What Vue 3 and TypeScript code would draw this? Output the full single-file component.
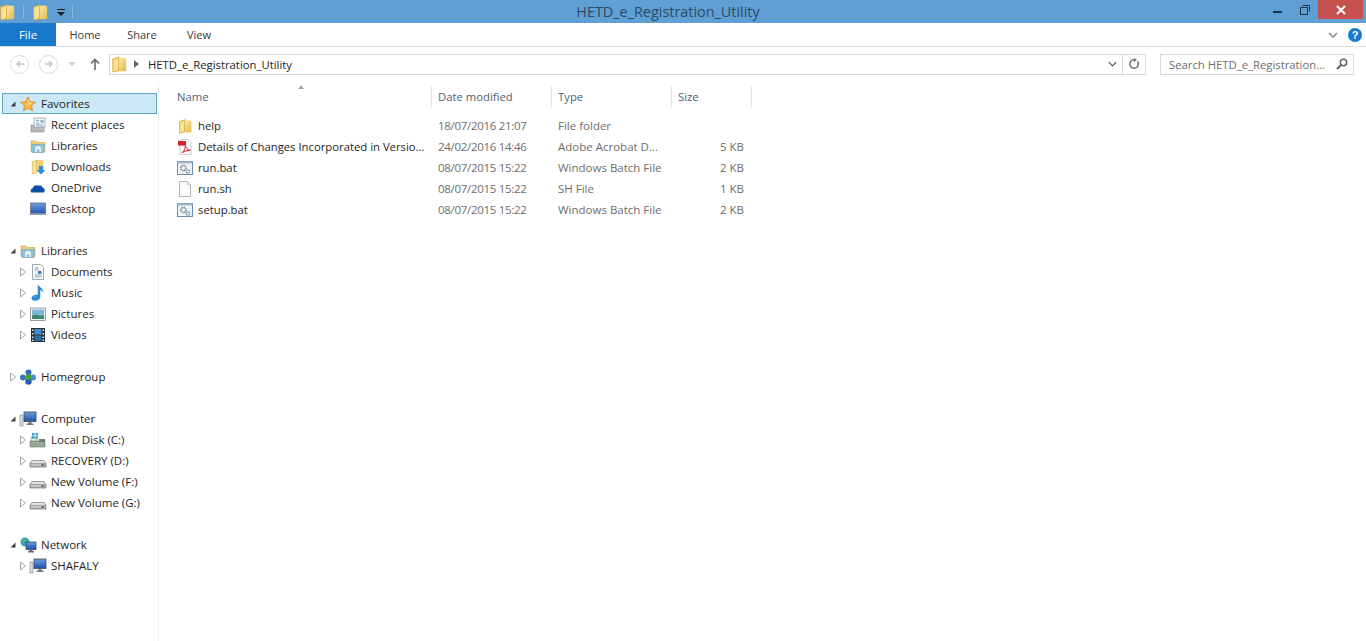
<template>
  <div class="explorer">
    <!-- shared icons, used through <use> below -->
    <svg class="defs" aria-hidden="true">
      <defs>
        <linearGradient id="g-folder" x1="0" y1="0" x2="1" y2="1">
          <stop offset="0" stop-color="#fff0b0" />
          <stop offset="1" stop-color="#e2b548" />
        </linearGradient>
        <linearGradient id="g-screen" x1="0" y1="0" x2="0" y2="1">
          <stop offset="0" stop-color="#6f9fe0" />
          <stop offset="1" stop-color="#1c4fa8" />
        </linearGradient>
        <linearGradient id="g-drive" x1="0" y1="0" x2="0" y2="1">
          <stop offset="0" stop-color="#f4f4f4" />
          <stop offset="1" stop-color="#a4a4a4" />
        </linearGradient>
      </defs>
      <symbol id="i-folder" viewBox="0 0 16 16">
        <path d="M2 3.500 7 1.500h1.500V14L4 15.200H2.600z" fill="#e4b94f" />
        <path d="M8 2.500h5.600l.8 1v10.200l-.8.8H6.500L8 13z" fill="url(#g-folder)" />
        <path d="M2.500 4 7.600 2v11.400l-5.100 1.800z" fill="#f8e296" stroke="#d5a63d" stroke-width=".6" />
      </symbol>
      <symbol id="i-star" viewBox="0 0 16 16">
        <path d="M8 .8 10.200 5.600l5.200.6-3.900 3.500 1.100 5.200L8 12.300l-4.600 2.600 1.100-5.200L.6 6.200l5.200-.6z" fill="#f6b73c" stroke="#d98a35" stroke-width=".8" />
        <path d="M8 3.500 9.300 6.600l3 .4L8 9.600z" fill="#ffe08a" />
      </symbol>
      <symbol id="i-recent" viewBox="0 0 16 16">
        <rect x="1" y="8" width="13" height="7" fill="#b9b9b9" stroke="#8c8c8c" stroke-width=".6" />
        <rect x="4" y="1" width="11" height="9" fill="#f3f6f8" stroke="#8b9aa5" stroke-width=".7" />
        <path d="M6 3.500h3M6 6h3M6 8h7" stroke="#7a8a96" stroke-width=".8" />
        <rect x="10.500" y="3" width="3" height="3" fill="#8db3cc" />
      </symbol>
      <symbol id="i-library" viewBox="0 0 16 16">
        <path d="M1 3h5l1 1.500h8V14H1z" fill="#edcf76" stroke="#c9a54a" stroke-width=".6" />
        <path d="M1.500 6.500h13l-.7 8H2.200z" fill="#8cc3e0" stroke="#5f9dbf" stroke-width=".5" />
        <path d="M5 14V11a3 3 0 0 1 6 0v3H9.500v-2.600h-3V14z" fill="#e8f3f8" />
      </symbol>
      <symbol id="i-download" viewBox="0 0 16 16">
        <path d="M2 2.500 6.500 1h6l.8 1v9H2z" fill="#efcf78" />
        <path d="M2.200 3 6.500 1.500V14L2.200 15z" fill="#f8e4a2" stroke="#cfa13e" stroke-width=".5" />
        <path d="M9 7h4v4h2.500L11 15.600 6.500 11H9z" fill="#2f8fdc" />
      </symbol>
      <symbol id="i-cloud" viewBox="0 0 16 16">
        <path d="M1.500 12.500c-1.600-1.400-.9-3.800 1-4C3.400 5.600 6.500 4.400 8.600 5.800c1.800-.8 3.700.2 4 2 2 .1 3 2.900 1.200 4.700z" fill="#0f4fa6" />
      </symbol>
      <symbol id="i-desktop" viewBox="0 0 16 16">
        <rect x=".5" y="2" width="15" height="11.500" fill="url(#g-screen)" stroke="#5c6672" stroke-width=".7" />
        <rect x=".5" y="12.200" width="15" height="1.600" fill="#9aa3ad" />
      </symbol>
      <symbol id="i-documents" viewBox="0 0 16 16">
        <path d="M2.500.5h8l3 3v12h-11z" fill="#fafbfc" stroke="#8894a0" stroke-width=".8" />
        <path d="M4.500 4h4M4.500 6h4M4.500 11h7M4.500 13h7" stroke="#7f8d9a" stroke-width=".8" />
        <rect x="8" y="7" width="3.500" height="2.800" fill="#3f78b8" />
      </symbol>
      <symbol id="i-music" viewBox="0 0 16 16">
        <path d="M9 .3c.8 2.800 4.800 3.600 4.400 7.400-.7-1.400-1.800-2.200-3.100-2.500v6.600c0 2.500-2.600 4-5.300 3.900-2.700-.1-4-1.800-3.300-3.500.8-2 3.800-2.900 6-2.200V.3z" fill="#2a8bd8" />
        <path d="M3.500 12.300c.7-1 2-1.400 3-1.400-1 .5-2 1-2.600 2.200z" fill="#9ad0f2" />
      </symbol>
      <symbol id="i-pictures" viewBox="0 0 16 16">
        <rect x=".5" y="2" width="15" height="12.500" fill="#f2f4f5" stroke="#7f8a94" stroke-width=".8" />
        <rect x="2" y="3.500" width="12" height="9.500" fill="#7fb7da" />
        <path d="M2 10c3-2 5-1 7-.4 2 .6 3.500 0 5-.6v4H2z" fill="#3d8566" />
      </symbol>
      <symbol id="i-videos" viewBox="0 0 16 16">
        <rect x="1" y="1" width="14" height="14" fill="#26323a" />
        <path d="M2 2.500h1.500V4H2zM2 6h1.500v1.500H2zM2 9.500h1.500V11H2zM2 12.500h1.500V14H2zM12.500 2.500H14V4h-1.500zM12.500 6H14v1.500h-1.500zM12.500 9.500H14V11h-1.500zM12.500 12.500H14V14h-1.500z" fill="#dfe6ea" />
        <rect x="4.500" y="2" width="7" height="5.500" fill="#3f8fd0" />
        <rect x="4.500" y="8.500" width="7" height="5.500" fill="#2f6f9e" />
      </symbol>
      <symbol id="i-homegroup" viewBox="0 0 18 16">
        <circle cx="9.500" cy="3.500" r="3" fill="#2e6cc0" />
        <circle cx="4" cy="8.500" r="3" fill="#3b74c4" />
        <circle cx="14" cy="8.500" r="3" fill="#4e8bd4" />
        <circle cx="9.500" cy="12.500" r="3.200" fill="#2a5cae" />
        <circle cx="9.500" cy="8" r="2.800" fill="#43a82f" />
      </symbol>
      <symbol id="i-computer" viewBox="0 0 18 16">
        <rect x="1" y="4" width="3" height="11" fill="#d8dde0" stroke="#7d878f" stroke-width=".6" />
        <rect x="5" y="1" width="12" height="9.500" fill="url(#g-screen)" stroke="#3e4a55" stroke-width=".8" />
        <path d="M9.500 10.500h3v2h2V14h-7v-1.500h2z" fill="#6f7a84" />
      </symbol>
      <symbol id="i-diskc" viewBox="0 0 18 16">
        <rect x="1" y="9" width="15" height="6" fill="#9aa89a" stroke="#66736a" stroke-width=".6" />
        <path d="M2 5h6v4H2z" fill="#dfe9c8" stroke="#76846f" stroke-width=".5" />
        <rect x="3" y="1" width="2.500" height="2.500" fill="#3aa0d8" />
        <rect x="6.500" y="1" width="2.500" height="2.500" fill="#3aa0d8" />
        <rect x="3" y="4.200" width="2.500" height="2.500" fill="#3aa0d8" />
        <rect x="6.500" y="4.200" width="2.500" height="2.500" fill="#3aa0d8" />
        <rect x="10" y="7" width="6" height="3" fill="#6d7b70" />
      </symbol>
      <symbol id="i-drive" viewBox="0 0 18 16">
        <path d="M3 7.500h12l2 3V14H1v-3.500z" fill="url(#g-drive)" stroke="#6f6f6f" stroke-width=".7" />
        <rect x="1.500" y="10.500" width="15" height="3" fill="#c4c4c4" stroke="#7c7c7c" stroke-width=".4" />
        <rect x="12.500" y="11.300" width="2.500" height="1.400" fill="#4c4c4c" />
      </symbol>
      <symbol id="i-network" viewBox="0 0 18 16">
        <circle cx="6" cy="5" r="4.500" fill="#2fa7c9" />
        <path d="M3 3c1.500-1 3.500-1 4.500 0 .5 1.500-1.500 3-3 2.500z" fill="#5cbf4a" />
        <rect x="7" y="5" width="10" height="7.500" fill="url(#g-screen)" stroke="#2f3d4a" stroke-width=".7" />
        <path d="M10.500 12.500h3V14H15v1.500H9V14h1.500z" fill="#5f6a74" />
      </symbol>
      <symbol id="i-pdf" viewBox="0 0 16 16">
        <path d="M3 .5h8l3 3v12H3z" fill="#fbfbfb" stroke="#b8b8b8" stroke-width=".7" />
        <rect x="1" y="2" width="8" height="4.500" fill="#d3202a" />
        <path d="M5 13.800c2.500-2 3.600-5 3.300-7.300.9 2.800 2.400 4.500 4.900 4.700-3 .1-5.500.8-8.200 2.600z" fill="none" stroke="#d3202a" stroke-width="1" />
      </symbol>
      <symbol id="i-bat" viewBox="0 0 16 16">
        <rect x=".5" y="1.500" width="15" height="13" fill="#eef3f8" stroke="#5f7f9c" stroke-width=".9" />
        <rect x=".5" y="1.500" width="15" height="2" fill="#9fbbd4" />
        <circle cx="6.500" cy="8" r="2.600" fill="none" stroke="#6d7a86" stroke-width="1.500" stroke-dasharray="1.300 .7" />
        <circle cx="11" cy="11.500" r="1.600" fill="none" stroke="#4f7fa8" stroke-width="1.100" stroke-dasharray="1 .5" />
      </symbol>
      <symbol id="i-file" viewBox="0 0 16 16">
        <path d="M2.500.5h8l3 3v12h-11z" fill="#fdfdfd" stroke="#a3a3a3" stroke-width=".8" />
        <path d="M10.500.5v3h3" fill="#eee" stroke="#b5b5b5" stroke-width=".7" />
      </symbol>
      <symbol id="i-open" viewBox="0 0 8 8">
        <path d="M6.500 1.500v5h-5z" fill="#404040" />
      </symbol>
      <symbol id="i-closed" viewBox="0 0 8 10">
        <path d="M1.500 1 6.500 5l-5 4z" fill="#fff" stroke="#a6a6a6" />
      </symbol>
    </svg>

    <header class="titlebar">
      <div class="quick">
        <svg class="qa-folder"><use href="#i-folder" /></svg>
        <span class="qa-sep"></span>
        <svg class="qa-folder"><use href="#i-folder" /></svg>
        <svg class="qa-drop" viewBox="0 0 8 7">
          <path d="M0 0h8v1H0zM0 3h8L4 7z" fill="#1c1c1c" />
        </svg>
        <span class="qa-sep"></span>
      </div>
      <div class="title">HETD_e_Registration_Utility</div>
      <div class="winbtns">
        <span class="winbtn">
          <svg viewBox="0 0 10 10" width="10" height="10"><rect y="6" width="9" height="2" fill="#1d3347" /></svg>
        </span>
        <span class="winbtn">
          <svg viewBox="0 0 10 10" width="10" height="10">
            <path d="M2.500 .5h7v6M.5 2.500h7v7h-7z" fill="none" stroke="#1d3347" />
          </svg>
        </span>
        <span class="winclose">
          <svg viewBox="0 0 10 10" width="10" height="10">
            <path d="M1 1l8 8M9 1l-8 8" stroke="#fff" stroke-width="2" />
          </svg>
        </span>
      </div>
    </header>

    <nav class="ribbon">
      <span class="tab-file">File</span>
      <span v-for="t in tabs" :key="t" class="tab">{{ t }}</span>
      <span class="ribbon-gap"></span>
      <svg class="rib-chev" viewBox="0 0 10 6"><path d="M1 1l4 4 4-4" fill="none" stroke="#8a8a8a" stroke-width="1.500" /></svg>
      <span class="help">?</span>
    </nav>

    <div class="addressrow">
      <span class="navbtn">
        <svg viewBox="0 0 10 10" width="10" height="10"><path d="M9 5H2M5 2 2 5l3 3" fill="none" stroke="#c4c4c4" stroke-width="1.400" /></svg>
      </span>
      <span class="navbtn">
        <svg viewBox="0 0 10 10" width="10" height="10"><path d="M1 5h7M5 2l3 3-3 3" fill="none" stroke="#c4c4c4" stroke-width="1.400" /></svg>
      </span>
      <svg class="nav-drop" viewBox="0 0 8 4"><path d="M0 0h8L4 4z" fill="#d0d0d0" /></svg>
      <svg class="nav-up" viewBox="0 0 10 12"><path d="M5 12V2M1 5.500 5 1.500l4 4" fill="none" stroke="#6a6a6a" stroke-width="1.600" /></svg>
      <div class="address">
        <svg class="addr-folder"><use href="#i-folder" /></svg>
        <svg class="addr-sep" viewBox="0 0 5 8"><path d="M0 0l5 4-5 4z" fill="#666" /></svg>
        <span class="addr-text">HETD_e_Registration_Utility</span>
        <svg class="addr-drop" viewBox="0 0 10 6"><path d="M1 1l4 4 4-4" fill="none" stroke="#555" stroke-width="1.300" /></svg>
        <span class="addr-refresh">
          <svg viewBox="0 0 12 12" width="12" height="12">
            <path d="M9.600 3.500A4.300 4.300 0 1 1 6 1.700" fill="none" stroke="#6d6d6d" stroke-width="1.500" />
            <path d="M6 0v4l3-2z" fill="#6d6d6d" />
          </svg>
        </span>
      </div>
      <div class="search">
        <span class="search-text">Search HETD_e_Registration...</span>
        <svg viewBox="0 0 12 12" width="12" height="12">
          <circle cx="7.500" cy="4.500" r="3.200" fill="none" stroke="#666" stroke-width="1.500" />
          <path d="M5 7l-4 4" stroke="#666" stroke-width="2" />
        </svg>
      </div>
    </div>

    <div class="body">
      <aside class="tree">
        <template v-for="(r, i) in treeRows" :key="i">
          <div v-if="!r.label" class="tree-gap"></div>
          <div v-else class="tree-row" :class="{ selected: r.selected, child: r.child }">
            <svg v-if="r.exp === 'open'" class="exp"><use href="#i-open" /></svg>
            <svg v-else-if="r.exp === 'closed'" class="exp"><use href="#i-closed" /></svg>
            <span v-else class="exp"></span>
            <svg class="tree-ico"><use :href="'#i-' + r.icon" /></svg>
            <span class="tree-label">{{ r.label }}</span>
          </div>
        </template>
      </aside>

      <main class="files">
        <div class="cols heads">
          <div class="head name-col">
            Name
            <svg class="sort" viewBox="0 0 8 5"><path d="M4 0l4 5H0z" fill="#8fa6bb" /></svg>
          </div>
          <div class="head">Date modified</div>
          <div class="head">Type</div>
          <div class="head">Size</div>
        </div>
        <div v-for="f in files" :key="f.name" class="cols row">
          <div class="cell-name">
            <svg class="file-ico"><use :href="'#i-' + f.icon" /></svg>
            <span>{{ f.name }}</span>
          </div>
          <div class="cell date">{{ f.date }}</div>
          <div class="cell">{{ f.type }}</div>
          <div class="cell size">{{ f.size }}</div>
        </div>
      </main>
    </div>
  </div>
</template>

<script setup lang="ts">
interface TreeRow {
  label?: string
  icon?: string
  exp?: 'open' | 'closed'
  child?: boolean
  selected?: boolean
}

const tabs = ['Home', 'Share', 'View']

const treeRows: TreeRow[] = [
  { label: 'Favorites', icon: 'star', exp: 'open', selected: true },
  { label: 'Recent places', icon: 'recent', child: true },
  { label: 'Libraries', icon: 'library', child: true },
  { label: 'Downloads', icon: 'download', child: true },
  { label: 'OneDrive', icon: 'cloud', child: true },
  { label: 'Desktop', icon: 'desktop', child: true },
  {},
  { label: 'Libraries', icon: 'library', exp: 'open' },
  { label: 'Documents', icon: 'documents', exp: 'closed', child: true },
  { label: 'Music', icon: 'music', exp: 'closed', child: true },
  { label: 'Pictures', icon: 'pictures', exp: 'closed', child: true },
  { label: 'Videos', icon: 'videos', exp: 'closed', child: true },
  {},
  { label: 'Homegroup', icon: 'homegroup', exp: 'closed' },
  {},
  { label: 'Computer', icon: 'computer', exp: 'open' },
  { label: 'Local Disk (C:)', icon: 'diskc', exp: 'closed', child: true },
  { label: 'RECOVERY (D:)', icon: 'drive', exp: 'closed', child: true },
  { label: 'New Volume (F:)', icon: 'drive', exp: 'closed', child: true },
  { label: 'New Volume (G:)', icon: 'drive', exp: 'closed', child: true },
  {},
  { label: 'Network', icon: 'network', exp: 'open' },
  { label: 'SHAFALY', icon: 'computer', exp: 'closed', child: true }
]

const files = [
  { name: 'help', icon: 'folder', date: '18/07/2016 21:07', type: 'File folder', size: '' },
  { name: 'Details of Changes Incorporated in Versio...', icon: 'pdf', date: '24/02/2016 14:46', type: 'Adobe Acrobat D...', size: '5 KB' },
  { name: 'run.bat', icon: 'bat', date: '08/07/2015 15:22', type: 'Windows Batch File', size: '2 KB' },
  { name: 'run.sh', icon: 'file', date: '08/07/2015 15:22', type: 'SH File', size: '1 KB' },
  { name: 'setup.bat', icon: 'bat', date: '08/07/2015 15:22', type: 'Windows Batch File', size: '2 KB' }
]
</script>

<style>
html,
body {
  margin: 0;
  background: #fff;
  overflow: hidden;
}
</style>

<style scoped>
.explorer {
  height: 100vh;
  display: flex;
  flex-direction: column;
  background: #fff;
  font-family: "Open Sans", "Noto Sans", "Liberation Sans", sans-serif;
  font-size: 11.5px;
  color: #1e1e1e;
}

.defs {
  position: absolute;
  width: 0;
  height: 0;
}

.titlebar {
  height: 23px;
  flex: none;
  display: flex;
  background: #5f9fd3;
}

.quick {
  width: 78px;
  display: flex;
  align-items: center;
}

.qa-folder {
  width: 18px;
  height: 18px;
  flex: none;
  margin-left: 7px;
}

.qa-folder:first-child {
  margin-left: -2px;
}

.qa-sep {
  width: 1px;
  height: 13px;
  margin-left: 7px;
  background: #8fbbdf;
}

.qa-drop {
  width: 8px;
  height: 7px;
  margin: 2px 0 0 8px;
}

.title {
  flex: 1;
  text-align: center;
  line-height: 23px;
  font-size: 14.4px;
  color: #2b4a66;
  white-space: nowrap;
}

.winbtns {
  width: 108px;
  display: flex;
  justify-content: flex-end;
  align-items: flex-start;
  padding-right: 3px;
  box-sizing: border-box;
}

.winbtn {
  width: 27px;
  height: 19px;
  display: flex;
  align-items: center;
  justify-content: center;
}

.winclose {
  width: 45px;
  height: 19px;
  background: #c75050;
  display: flex;
  align-items: center;
  justify-content: center;
}

.ribbon {
  height: 23px;
  flex: none;
  display: flex;
  align-items: center;
  border-bottom: 1px solid #dadbdc;
}

.tab-file {
  width: 56px;
  height: 23px;
  line-height: 23px;
  text-align: center;
  background: #1979ca;
  color: #fff;
}

.tab {
  width: 57px;
  padding-left: 1px;
  box-sizing: border-box;
  text-align: center;
  color: #3b3b3b;
  font-size: 11px;
}

.ribbon-gap {
  flex: 1;
}

.rib-chev {
  width: 10px;
  height: 6px;
  margin-right: 10px;
}

.help {
  width: 14px;
  height: 14px;
  margin-right: 4px;
  border-radius: 50%;
  background: #1b78cc;
  color: #fff;
  font: bold 11px/14px "Liberation Sans", sans-serif;
  text-align: center;
}

.addressrow {
  height: 36px;
  flex: none;
  box-sizing: border-box;
  display: flex;
  align-items: center;
  padding: 0 12px 2px 10px;
}

.navbtn {
  width: 17px;
  height: 17px;
  margin-right: 10px;
  border: 1px solid #dcdcdc;
  border-radius: 50%;
  display: flex;
  align-items: center;
  justify-content: center;
}

.nav-drop {
  width: 8px;
  height: 4px;
}

.nav-up {
  width: 10px;
  height: 12px;
  margin-left: 14px;
}

.address {
  flex: 1;
  height: 21px;
  margin-left: 9px;
  border: 1px solid #d9d9d9;
  display: flex;
  align-items: center;
  box-sizing: border-box;
  font-size: 11.3px;
}

.addr-folder {
  width: 18px;
  height: 18px;
  flex: none;
}

.addr-sep {
  width: 5px;
  height: 8px;
  margin-left: 6px;
}

.addr-text {
  flex: 1;
  margin-left: 9px;
  color: #1e1e1e;
}

.addr-drop {
  width: 9px;
  height: 6px;
  margin-right: 5px;
}

.addr-refresh {
  width: 22px;
  height: 19px;
  border-left: 1px solid #d9d9d9;
  display: flex;
  align-items: center;
  justify-content: center;
}

.search {
  width: 194px;
  height: 21px;
  margin-left: 14px;
  padding: 0 5px 0 8px;
  border: 1px solid #d9d9d9;
  box-sizing: border-box;
  display: flex;
  align-items: center;
  justify-content: space-between;
  font-size: 11.3px;
}

.search-text {
  color: #6d6d6d;
}

.body {
  flex: 1;
  min-height: 0;
  display: flex;
}

.tree {
  width: 159px;
  flex: none;
  box-sizing: border-box;
  padding: 10px 0 0 2px;
  border-right: 1px solid #f1f1f1;
  font-size: 11.5px;
}

.tree-gap {
  height: 21px;
}

.tree-row {
  height: 21px;
  width: 155px;
  box-sizing: border-box;
  display: flex;
  align-items: center;
  padding-left: 7px;
}

.tree-row.selected {
  background: #cbe8f6;
  outline: 1px solid #5ba5c8;
  outline-offset: -1px;
}

.tree-row.child {
  padding-left: 17px;
}

.exp {
  width: 8px;
  height: 10px;
  flex: none;
}

.tree-ico {
  width: 18px;
  height: 16px;
  flex: none;
  margin-left: 2px;
}

.tree-label {
  margin-left: 4px;
  white-space: nowrap;
}

.files {
  flex: 1;
  min-width: 0;
  padding-top: 3px;
}

.cols {
  display: grid;
  grid-template-columns: 255px 120px 120px 80px;
  margin-left: 18px;
  width: 575px;
}

.heads {
  height: 22px;
  margin-bottom: 7px;
  align-items: stretch;
}

.head {
  position: relative;
  padding-left: 6px;
  line-height: 22px;
  font-size: 11.3px;
  color: #4f6276;
  border-right: 1px solid #e6e6e6;
}

.name-col {
  padding-left: 0;
}

.sort {
  position: absolute;
  left: 121px;
  top: -1px;
  width: 6px;
  height: 4px;
}

.row {
  height: 21px;
  align-items: center;
}

.cell-name {
  display: flex;
  align-items: center;
  white-space: nowrap;
  font-size: 11.3px;
}

.file-ico {
  width: 16px;
  height: 16px;
  flex: none;
  margin-right: 5px;
}

.cell {
  padding-left: 6px;
  color: #6d6d6d;
  white-space: nowrap;
}

.date {
  letter-spacing: -0.3px;
}

.size {
  text-align: right;
  padding-right: 8px;
}
</style>
